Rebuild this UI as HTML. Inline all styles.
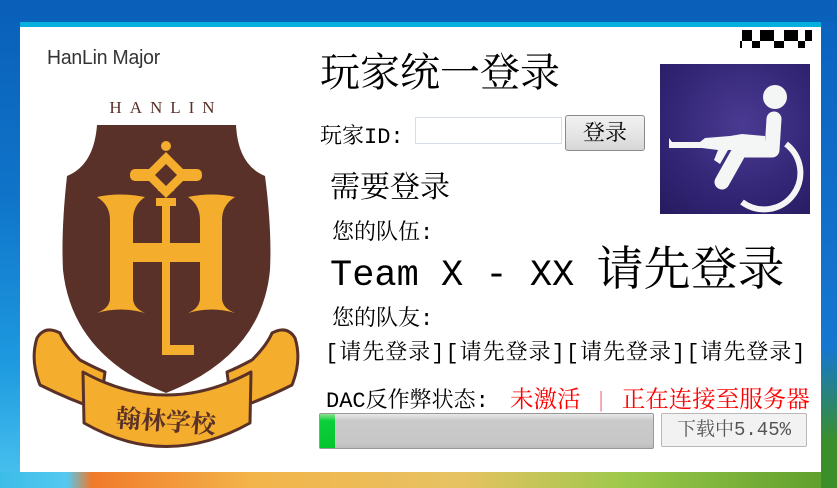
<!DOCTYPE html>
<html><head><meta charset="utf-8"><style>
*{margin:0;padding:0;box-sizing:border-box}
body{width:837px;height:488px;overflow:hidden;position:relative;background:linear-gradient(180deg,#0a5fb8 0%,#0f74c9 40%,#1e9ae0 75%,#4cc4ef 100%);font-family:"Liberation Serif","Noto Serif CJK SC",serif}
.win{position:absolute;left:20px;top:22px;width:801px;height:450px;background:#fff;border-top:5px solid #05b0de}
.a{position:absolute;white-space:nowrap;color:#000}
.m{font-family:"Liberation Mono","Noto Serif CJK SC",monospace}
</style></head><body>
<div style="position:absolute;left:0;top:472px;width:837px;height:16px;background:linear-gradient(90deg,#3bbde8 0%,#55c8ef 8%,#f07a2a 11%,#f3b44a 30%,#e7c262 55%,#9cc84a 75%,#5a9c2a 100%)"></div>
<div style="position:absolute;left:821px;top:22px;width:16px;height:466px;background:linear-gradient(180deg,#0b63c0,#1577d0 70%,#3a8f2a 90%)"></div>
<div class="win"></div>
<div class="a" style="left:47px;top:47px;font:20px 'Liberation Sans',sans-serif;color:#333;letter-spacing:-0.2px;transform:scaleX(0.97);transform-origin:left">HanLin Major</div>
<svg style="position:absolute;left:0;top:80px" width="310" height="400" viewBox="0 80 310 400">
<text x="166" y="113" text-anchor="middle" font-family="Liberation Serif" font-size="17" fill="#5a3128" letter-spacing="8">HANLIN</text>
<path d="M97 125 L236 125 Q238 165 265 176 Q272 230 270 270 Q262 355 166 393 Q72 355 63 270 Q61 230 67 176 Q94 165 97 125Z" fill="#5a3128"/>
<g fill="#f5ad2d">
<path d="M97 197 Q120 192 145 197 Q133 205 133 220 L133 243 L200 243 L200 220 Q200 205 188 197 Q212 192 235 197 Q222 205 222 220 L222 298 Q222 308 235 313 Q212 306 188 313 Q200 308 200 298 L200 262 L133 262 L133 298 Q133 308 145 313 Q120 306 97 313 Q110 308 110 298 L110 220 Q110 205 97 197Z"/>
<rect x="162" y="200" width="8" height="155"/><rect x="162" y="345" width="32" height="10"/>
<rect x="156" y="198" width="20" height="8"/>
<rect x="158" y="185" width="16" height="6"/>
<path d="M166 152 L189 175 L166 198 L143 175Z"/>
<rect x="130" y="169" width="72" height="12" rx="5"/>
<circle cx="166" cy="146" r="5"/>
</g>
<path d="M166 164 L177 175 L166 186 L155 175Z" fill="#5a3128"/>
<g stroke="#5a3128" stroke-width="3" fill="#f5ad2d" stroke-linejoin="round">
<path d="M37 338 Q45 325 60 333 Q65 345 80 360 Q95 368 105 372 L100 410 Q70 400 40 385 Q30 360 37 338Z"/>
<path d="M295 338 Q287 325 272 333 Q267 345 252 360 Q237 368 227 372 L232 410 Q262 400 292 385 Q302 360 295 338Z"/>
<path d="M83 372 Q166 418 251 372 L250 423 Q166 470 84 423Z"/>
</g>
<text x="166" y="430" text-anchor="middle" font-family="Noto Serif CJK SC" font-size="25" fill="#5a3128" font-weight="bold" transform="rotate(4 166 420)">翰林学校</text>
</svg>
<div class="a" style="left:320px;top:41px;font-size:40px">玩家统一登录</div>
<div class="a m" style="left:320px;top:119px;font-size:22px">玩家ID:</div>
<div style="position:absolute;left:415px;top:117px;width:147px;height:27px;border:1px solid #d6dde8;background:#fff"></div>
<div style="position:absolute;left:565px;top:115px;width:80px;height:36px;border:1px solid #8a8a8a;border-radius:3px;background:linear-gradient(#f2f2f2,#e6e6e6 50%,#d6d6d6);font-size:22px;text-align:center;line-height:34px">登录</div>
<div class="a" style="left:330px;top:162px;font-size:30px">需要登录</div>
<div class="a m" style="left:332px;top:215px;font-size:22px">您的队伍:</div>
<div class="a" style="left:330px;top:232px;font-size:47px"><span class="m" style="font-size:37px">Team X - XX </span>请先登录</div>
<div class="a m" style="left:332px;top:301px;font-size:22px">您的队友:</div>
<div class="a m" style="left:325px;top:335px;font-size:22px;letter-spacing:1px">[请先登录][请先登录][请先登录][请先登录]</div>
<div class="a m" style="left:326px;top:380px;font-size:22px">DAC反作弊状态: <span style="color:#f00;margin-left:8px;font-size:23.5px">未激活</span><span style="color:#f7a0a8;margin:0 14px">|</span><span style="color:#f00;font-size:23.5px">正在连接至服务器</span></div>
<div style="position:absolute;left:319px;top:413px;width:335px;height:36px;border:1px solid #999;border-radius:2px;background:linear-gradient(#e8e8e8,#cacaca 20%,#c8c8c8 85%,#bbb)"><div style="position:absolute;left:0;top:0;width:15px;height:34px;background:linear-gradient(#8ee08e,#0ccf3c 20%,#06c52f)"></div></div>
<div style="position:absolute;left:661px;top:413px;width:146px;height:34px;border:1px solid #b8b8b8;border-radius:2px;background:#f2f2f2;color:#555;font-size:19px;text-align:center;line-height:32px" class="m">下载中5.45%</div>
<div style="position:absolute;left:660px;top:64px;width:150px;height:150px;background:radial-gradient(circle at 55% 40%,#4a3a92,#2f2270 70%,#261b5e)"></div>
<svg style="position:absolute;left:660px;top:64px" width="150" height="150" viewBox="0 0 150 150" fill="#f4f6f6" stroke="#f4f6f6">
<circle cx="115" cy="33" r="12" stroke="none"/>
<path d="M114 55 L112 86 L80 86 L62 118" fill="none" stroke-width="15" stroke-linecap="round" stroke-linejoin="round"/>
<path d="M126 80 A34 34 0 1 1 82 138" fill="none" stroke-width="6"/>
<path d="M9 74 L12 78 L40 78 L45 74 L70 72 L82 70 L105 72 L105 85 L85 88 L82 92 L76 92 L73 86 L68 86 L60 100 L54 96 L58 86 L42 84 L12 84 L9 84Z" stroke="none"/>
</svg>
<svg style="position:absolute;left:740px;top:30px" width="76" height="18"><g fill="#000"><rect x="2" y="0" width="10" height="11"/><rect x="20" y="0" width="14" height="11"/><rect x="44" y="0" width="14" height="11"/><rect x="65" y="0" width="7" height="11"/><rect x="12" y="11" width="8" height="7"/><rect x="34" y="11" width="10" height="7"/><rect x="58" y="11" width="7" height="7"/><rect x="0" y="11" width="2" height="7"/></g></svg>
</body></html>
